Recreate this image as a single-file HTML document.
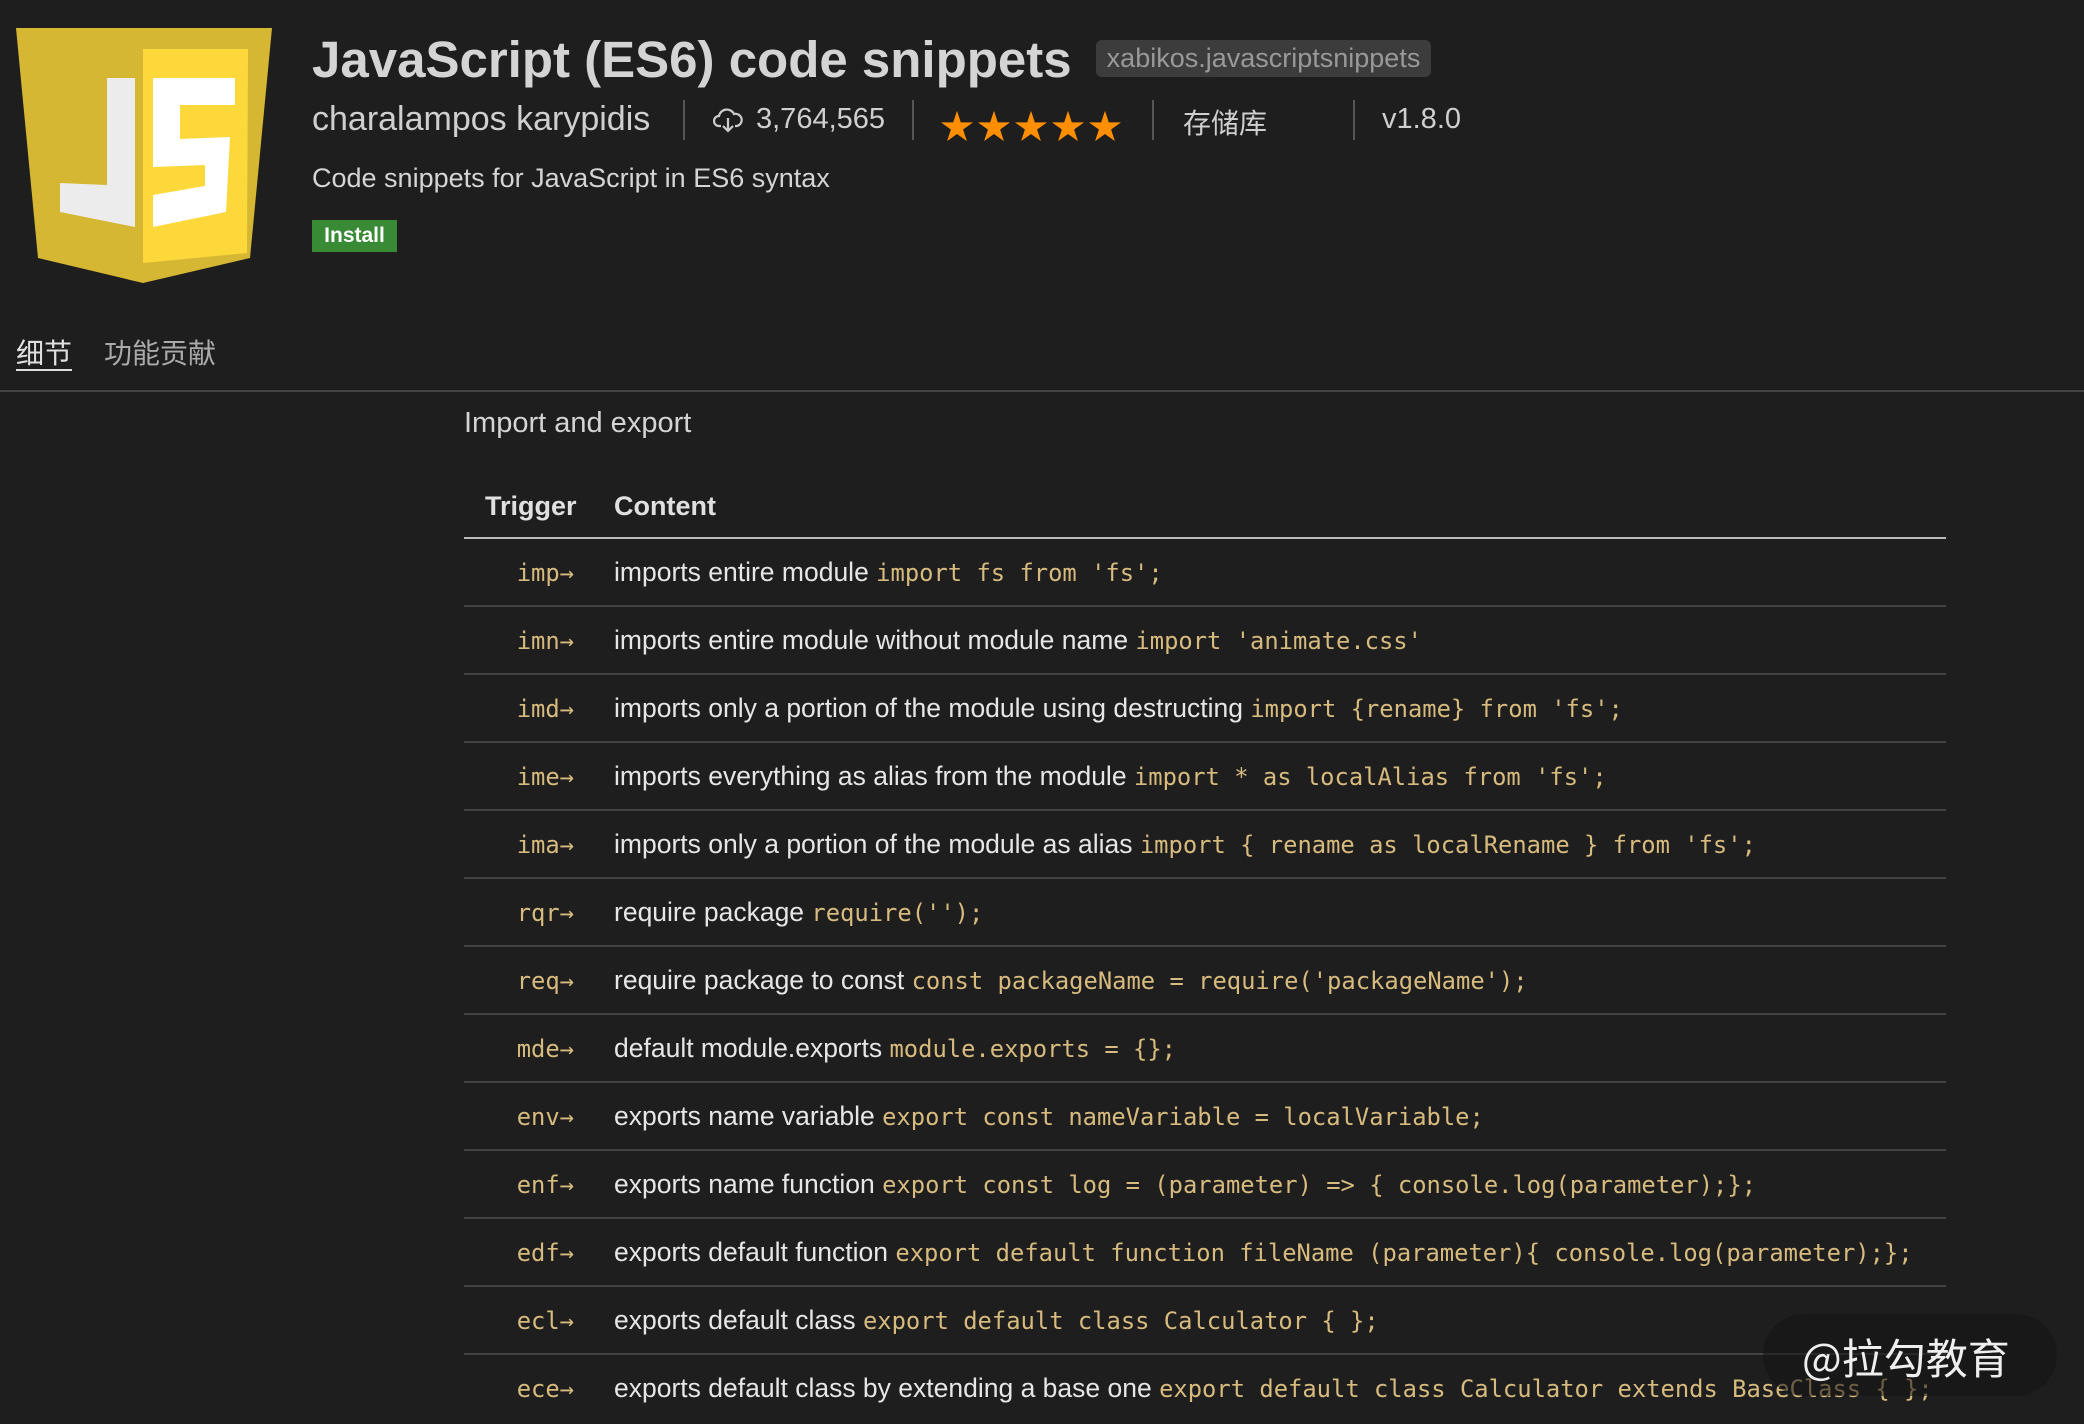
<!DOCTYPE html>
<html><head><meta charset="utf-8"><style>
*{margin:0;padding:0;box-sizing:border-box}
body{width:2084px;height:1424px;background:#1e1e1e;color:#cccccc;font-family:"Liberation Sans","Noto Sans CJK SC",sans-serif;position:relative;overflow:hidden}
.a{position:absolute;white-space:nowrap}
.div{position:absolute;top:100px;width:2px;height:40px;background:#555}
.mono{font-family:"DejaVu Sans Mono","Liberation Mono",monospace;color:#d7ba7d;font-size:23.8px}
.row{position:absolute;left:464px;width:1482px;height:68px;border-bottom:2px solid #444}
.row .t{position:absolute;right:1372px;top:20px}
.row .c{position:absolute;left:150px;top:18px;font-size:26.5px;color:#e6e6e6;white-space:nowrap}
</style></head><body>
<svg class="a" style="left:0;top:0" width="290" height="290">
<polygon points="16,28 272,28 250,258 143,283 38,258" fill="#d6b733"/>
<polygon points="143,49 248,49 247,253 143,263" fill="#fdd83b"/>
<polygon points="107,78 135,78 135,227 60,212 60,183 107,185" fill="#ececec"/>
<polygon points="153,78 235,78 235,105 180,105 180,139 230,137 226,212 153,227 153,195 205,186 205,165 153,167" fill="#ffffff"/>
</svg>
<div class="a" style="left:312px;top:30px;font-size:51px;font-weight:bold;color:#d4d4d4">JavaScript (ES6) code snippets</div>
<div class="a" style="left:1096px;top:40px;width:335px;height:37px;background:#3c3c3c;border-radius:6px;color:#999;font-size:27px;line-height:37px;text-align:center">xabikos.javascriptsnippets</div>
<div class="a" style="left:312px;top:100px;font-size:34px;color:#cfcfcf">charalampos karypidis</div>
<div class="div" style="left:683px"></div>
<svg class="a" style="left:713px;top:106px" width="30" height="28" viewBox="0 0 30 28"><path d="M8 20H6a5 5 0 0 1 0-10 8 8 0 0 1 15-2 6 6 0 0 1 3 12h-2M15 12v13M10 20l5 5 5-5" fill="none" stroke="#ccc" stroke-width="2.2"/></svg>
<div class="a" style="left:756px;top:103px;font-size:29px;color:#cfcfcf">3,764,565</div>
<div class="div" style="left:912px"></div>
<div class="a" style="left:940px;top:100px;font-size:34px;color:#ff8e00;letter-spacing:3px">★★★★★</div>
<div class="div" style="left:1152px"></div>
<div class="a" style="left:1183px;top:102px;font-size:28px;color:#cfcfcf">存储库</div>
<div class="div" style="left:1353px"></div>
<div class="a" style="left:1382px;top:103px;font-size:29px;color:#cfcfcf">v1.8.0</div>
<div class="a" style="left:312px;top:163px;font-size:27px;color:#d4d4d4">Code snippets for JavaScript in ES6 syntax</div>
<div class="a" style="left:312px;top:220px;width:85px;height:32px;background:#388a34;color:#fff;font-weight:bold;font-size:21px;line-height:32px;text-align:center">Install</div>
<div class="a" style="left:16px;top:339px;font-size:28px;color:#e0e0e0;border-bottom:2px solid #e0e0e0;line-height:30px">细节</div>
<div class="a" style="left:104px;top:339px;font-size:28px;color:#aaa;line-height:30px">功能贡献</div>
<div class="a" style="left:0;top:390px;width:2084px;height:2px;background:#444"></div>
<div class="a" style="left:464px;top:407px;font-size:29px;color:#d4d4d4">Import and export</div>
<div class="a" style="left:485px;top:491px;font-size:27px;font-weight:bold;color:#e0e0e0">Trigger</div>
<div class="a" style="left:614px;top:491px;font-size:27px;font-weight:bold;color:#e0e0e0">Content</div>
<div class="a" style="left:464px;top:537px;width:1482px;height:2px;background:#bbb"></div>

<div class="row" style="top:539px"><span class="t mono">imp→</span><span class="c">imports entire module <span class="mono">import fs from 'fs';</span></span></div>
<div class="row" style="top:607px"><span class="t mono">imn→</span><span class="c">imports entire module without module name <span class="mono">import 'animate.css'</span></span></div>
<div class="row" style="top:675px"><span class="t mono">imd→</span><span class="c">imports only a portion of the module using destructing <span class="mono">import {rename} from 'fs';</span></span></div>
<div class="row" style="top:743px"><span class="t mono">ime→</span><span class="c">imports everything as alias from the module <span class="mono">import * as localAlias from 'fs';</span></span></div>
<div class="row" style="top:811px"><span class="t mono">ima→</span><span class="c">imports only a portion of the module as alias <span class="mono">import { rename as localRename } from 'fs';</span></span></div>
<div class="row" style="top:879px"><span class="t mono">rqr→</span><span class="c">require package <span class="mono">require('');</span></span></div>
<div class="row" style="top:947px"><span class="t mono">req→</span><span class="c">require package to const <span class="mono">const packageName = require('packageName');</span></span></div>
<div class="row" style="top:1015px"><span class="t mono">mde→</span><span class="c">default module.exports <span class="mono">module.exports = {};</span></span></div>
<div class="row" style="top:1083px"><span class="t mono">env→</span><span class="c">exports name variable <span class="mono">export const nameVariable = localVariable;</span></span></div>
<div class="row" style="top:1151px"><span class="t mono">enf→</span><span class="c">exports name function <span class="mono">export const log = (parameter) =&gt; { console.log(parameter);};</span></span></div>
<div class="row" style="top:1219px"><span class="t mono">edf→</span><span class="c">exports default function <span class="mono">export default function fileName (parameter){ console.log(parameter);};</span></span></div>
<div class="row" style="top:1287px"><span class="t mono">ecl→</span><span class="c">exports default class <span class="mono">export default class Calculator { };</span></span></div>
<div class="row" style="top:1355px;border:none"><span class="t mono">ece→</span><span class="c">exports default class by extending a base one <span class="mono">export default class Calculator extends BaseClass { };</span></span></div>

<div class="a" style="left:1763px;top:1314px;width:294px;height:82px;border-radius:41px;background:rgba(20,20,20,0.55)"></div>
<div class="a" style="left:1802px;top:1326px;font-size:42px;color:#eee;font-family:'Noto Sans CJK SC',sans-serif">@拉勾教育</div>
</body></html>
